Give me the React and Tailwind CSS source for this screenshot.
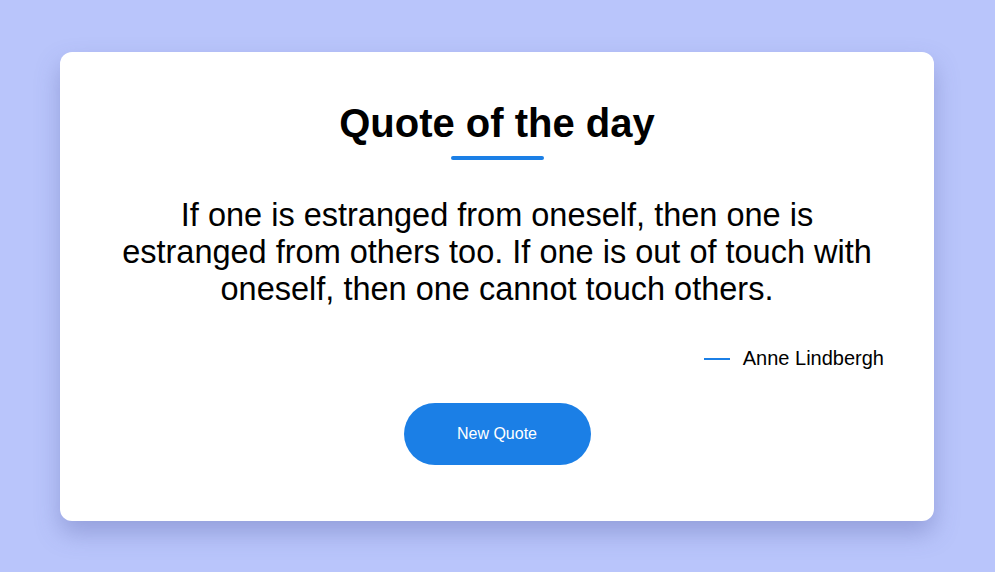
import { useState } from 'react';

const QUOTE = {
  text: 'If one is estranged from oneself, then one is estranged from others too. If one is out of touch with oneself, then one cannot touch others.',
  author: 'Anne Lindbergh',
};

export default function App() {
  const [quote] = useState(QUOTE);

  return (
    <div className="min-h-screen bg-[#b9c5fb] px-[60px] pt-[52px] font-['Liberation_Sans',Arial,sans-serif] text-black">
      <div className="w-[874px] h-[469px] rounded-[12px] bg-white px-[50px] pt-[48px] shadow-[0_12px_24px_rgba(80,90,160,0.35)] flex flex-col items-center">
        <h1 className="text-[40px] leading-[46px] font-bold">Quote of the day</h1>
        <div className="mt-[10px] h-[4px] w-[93px] rounded-full bg-[#1b7fe6]" />

        <p className="mt-[37px] w-[774px] text-center text-[32.5px] leading-[37px]">{quote.text}</p>

        <div className="mt-[39px] flex w-full items-center justify-end gap-[13px] text-[20px] leading-[23px]">
          <span className="h-[2px] w-[26px] bg-[#1b7fe6]" />
          <span>{quote.author}</span>
        </div>

        <button type="button" className="mt-[33px] h-[62px] w-[187px] rounded-full bg-[#1b7fe6] text-[16px] text-white">
          New Quote
        </button>
      </div>
    </div>
  );
}
